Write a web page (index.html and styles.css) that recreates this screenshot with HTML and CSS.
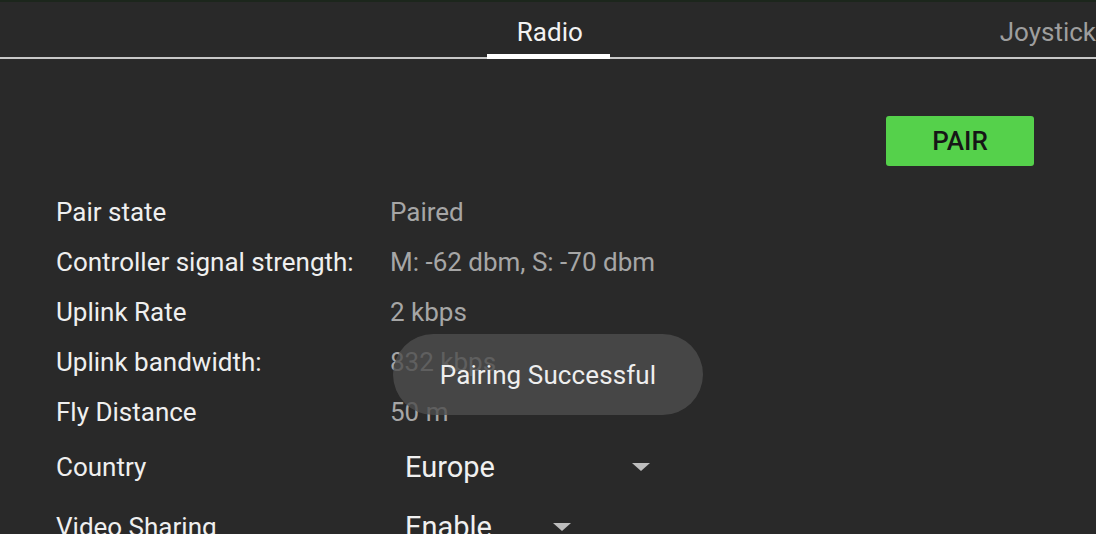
FILE: index.html
```html
<!DOCTYPE html>
<html>
<head>
<meta charset="utf-8">
<link rel="stylesheet" href="styles.css">
</head>
<body>
<div class="app">
  <div class="topline"></div>
  <nav class="tabs">
    <div class="tab active">Radio</div>
    <div class="tab">Joystick</div>
  </nav>
  <main class="content">
    <div class="actions">
      <button class="pair">PAIR</button>
    </div>
    <div class="rows">
      <div class="label">Pair state</div><div class="value">Paired</div>
      <div class="label">Controller signal strength:</div><div class="value">M: -62 dbm, S: -70 dbm</div>
      <div class="label">Uplink Rate</div><div class="value">2 kbps</div>
      <div class="label">Uplink bandwidth:</div><div class="value">832 kbps</div>
      <div class="label">Fly Distance</div><div class="value">50 m</div>
      <div class="label">Country</div>
      <div class="select wide"><span>Europe</span><span class="caret"></span></div>
      <div class="label">Video Sharing</div>
      <div class="select narrow"><span>Enable</span><span class="caret"></span></div>
    </div>
  </main>
  <div class="toast">Pairing Successful</div>
</div>
</body>
</html>
```
FILE: styles.css
```css
* { box-sizing: border-box; }
html, body {
  margin: 0;
  padding: 0;
  background: #292929;
  overflow: hidden;
}
body {
  width: 1096px;
  height: 534px;
  font-family: Roboto, "Liberation Sans", sans-serif;
  color: #ececec;
}
.app {
  position: relative;
  width: 1096px;
  height: 534px;
  overflow: hidden;
}
.topline {
  height: 2px;
  background: #1c261c;
}
.tabs {
  display: flex;
  align-items: flex-start;
  height: 57px;
  border-bottom: 2px solid #c8c8c8;
  white-space: nowrap;
}
.tab {
  font-size: 26px;
  height: 55px;
  padding-top: 14px;
  line-height: 32px;
  color: #9e9e9e;
  text-align: center;
}
.tab.active {
  margin-left: 487px;
  width: 125px;
  padding-left: 3px;
  height: 57px;
  color: #f2f2f2;
  box-shadow: inset 0 -5px 0 #ffffff;
}
.tab + .tab {
  margin-left: 390px;
  text-align: left;
}
.content {
  padding: 0 62px 0 56px;
}
.actions {
  display: flex;
  justify-content: flex-end;
  padding-top: 57px;
}
.pair {
  width: 148px;
  height: 50px;
  border: none;
  border-radius: 3px;
  background: #55d14b;
  color: #161616;
  font-family: Roboto, "Liberation Sans", sans-serif;
  font-weight: 500;
  font-size: 26px;
  padding: 0;
}
.rows {
  display: grid;
  grid-template-columns: 334px 1fr;
  grid-template-rows: repeat(5, 50px) 60px 60px;
  margin-top: 21px;
  font-size: 26px;
  align-items: center;
}
.label { color: #efefef; }
.value { color: #a6a6a6; }
.select {
  display: flex;
  align-items: center;
  justify-content: space-between;
  padding-left: 15px;
  font-size: 29px;
  color: #f0f0f0;
}
.select.wide { width: 260px; }
.select.narrow { width: 181px; }
.caret {
  width: 0;
  height: 0;
  border-left: 9px solid transparent;
  border-right: 9px solid transparent;
  border-top: 8px solid #bdbdbd;
}
.toast {
  position: absolute;
  left: 393px;
  top: 334px;
  width: 310px;
  height: 81px;
  border-radius: 41px;
  background: rgba(77, 77, 77, 0.8);
  color: #eeeeee;
  font-size: 26px;
  letter-spacing: 0.1px;
  display: flex;
  align-items: center;
  justify-content: center;
}
```
